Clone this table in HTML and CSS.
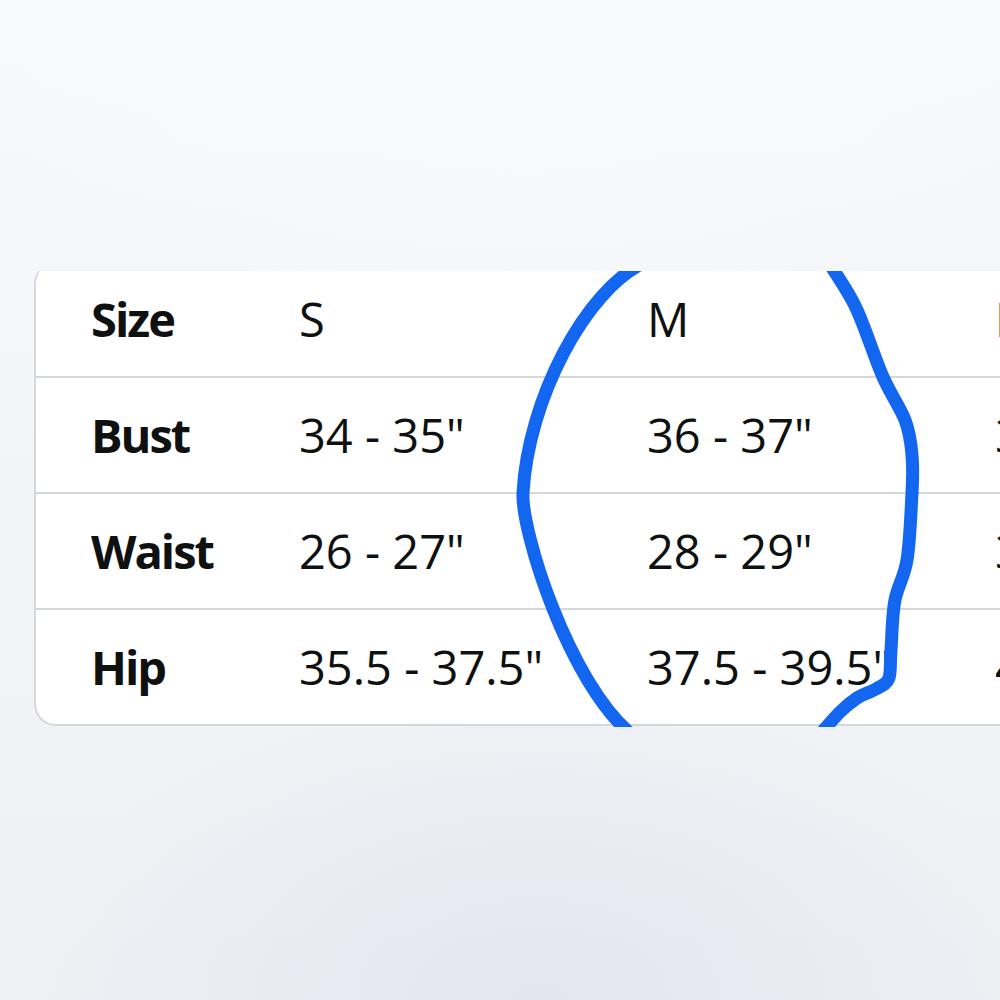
FILE: index.html
```html
<!DOCTYPE html>
<html lang="en">
<head>
    <meta charset="UTF-8">
    <meta name="viewport" content="width=device-width, initial-scale=1.0">
    <title>Size chart</title>
    <link rel="stylesheet" href="styles.css">
</head>
<body>

    <div class="chart-window">
        <div class="card">
            <table class="size-table">
                <colgroup>
                    <col class="col-label">
                    <col class="col-size">
                    <col class="col-size">
                    <col class="col-size">
                </colgroup>
                <tr>
                    <th>Size</th>
                    <td>S</td>
                    <td>M</td>
                    <td>L</td>
                </tr>
                <tr>
                    <th>Bust</th>
                    <td>34 - 35"</td>
                    <td>36 - 37"</td>
                    <td>38 - 39"</td>
                </tr>
                <tr>
                    <th>Waist</th>
                    <td>26 - 27"</td>
                    <td>28 - 29"</td>
                    <td>30 - 31"</td>
                </tr>
                <tr>
                    <th>Hip</th>
                    <td>35.5 - 37.5"</td>
                    <td>37.5 - 39.5"</td>
                    <td>40.5 - 42.5"</td>
                </tr>
            </table>
        </div>

        <!-- hand-drawn circle around the M column -->
        <svg class="scribble" width="1000" height="456" viewBox="0 271 1000 456">
            <path d="M645 262 C 585 290 528 400 523 493 C 521 530 568 682 632 735"
                  fill="none" stroke="#1266ef" stroke-width="13" stroke-linecap="round" stroke-linejoin="round"/>
            <path d="M826 258 C 836 275 848 290 857 310 C 866 330 875 359 883 377 C 891 395 900 407 905 420 C 910 433 911 443 912 455 C 913 467 913 476 912 493 C 911 511 910 542 907 560 C 904 578 898 585 895 600 C 892 615 892 637 891 650 C 890 663 891 672 889 678 C 887 684 881 686 876 689 C 871 692 863 694 857 698 C 851 702 847 705 840 712 C 833 719 823 731 815 740"
                  fill="none" stroke="#1266ef" stroke-width="13" stroke-linecap="round" stroke-linejoin="round"/>
        </svg>
    </div>

</body>
</html>
```

FILE: styles.css
```css
html {
    height: 100%;
}
body {
    margin: 0;
    height: 100%;
    overflow: hidden;
    font-family: "Open Sans", "Noto Sans", sans-serif;
    color: #0f1111;
    background-color: #f2f3f6;
    background-image:
        radial-gradient(ellipse 520px 320px at 540px 1000px, #e3e6ee 0%, rgba(227, 230, 238, 0) 100%),
        radial-gradient(ellipse 600px 300px at 520px 20px, #f9fafd 0%, rgba(249, 250, 253, 0) 100%),
        linear-gradient(#f8f9fb 0%, #f4f5f8 40%, #eef0f4 100%);
}
.chart-window {
    position: relative;
    margin-top: 271px;
    height: 456px;
    overflow: hidden;
}
.card {
    margin-top: -9px;
    margin-left: 34px;
    width: 1200px;
    background-color: #fff;
    border-left: 2px solid #d5d8da;
    border-bottom: 2px solid #d5d8da;
    border-radius: 22px 0 0 22px;
}
.size-table {
    border-collapse: collapse;
    table-layout: fixed;
    width: 1307px;
}
.col-label {
    width: 263px;
}
.col-size {
    width: 348px;
}
.size-table th,
.size-table td {
    height: 114px;
    padding: 0;
    text-align: left;
    vertical-align: middle;
    font-size: 47px;
    white-space: nowrap;
    border-bottom: 2px solid #d5d8da;
}
.size-table tr:last-child th,
.size-table tr:last-child td {
    border-bottom: none;
}
.size-table th {
    padding-left: 55px;
    font-weight: 700;
    letter-spacing: -2px;
}
.size-table td {
    font-weight: 400;
}
.scribble {
    position: absolute;
    left: 0;
    top: 0;
}
```
